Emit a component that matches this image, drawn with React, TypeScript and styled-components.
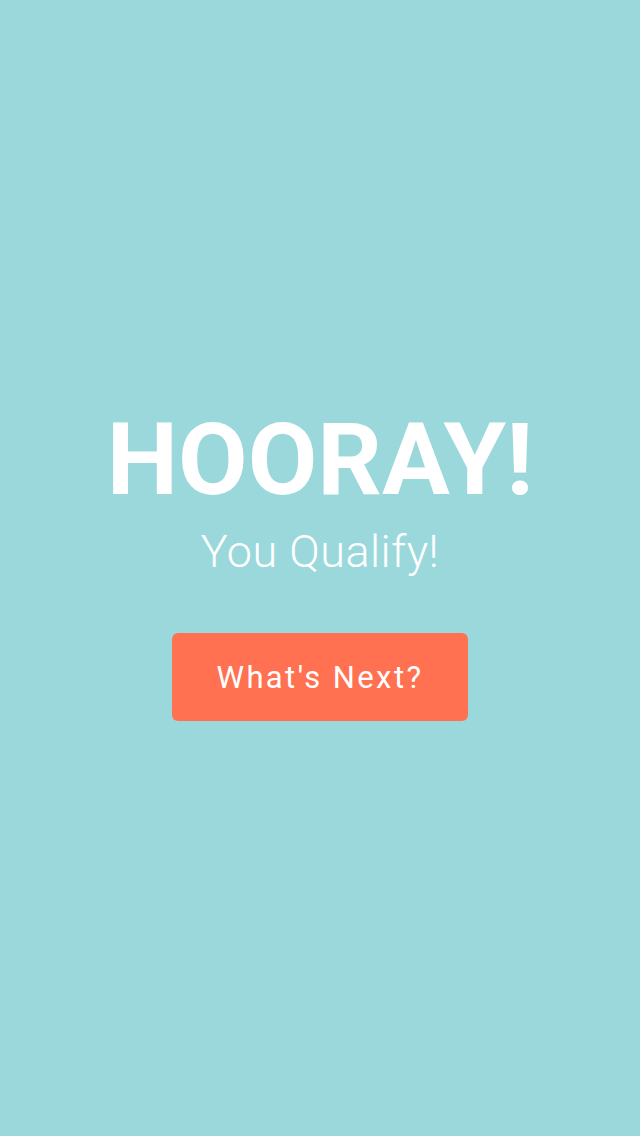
import styled, { createGlobalStyle } from 'styled-components';

const GlobalStyle = createGlobalStyle`
  html, body {
    margin: 0;
    padding: 0;
    background: #9bd8db;
  }
  body {
    font-family: Roboto, "Liberation Sans", sans-serif;
  }
`;

const Screen = styled.div`
  width: 640px;
  height: 1136px;
  background: #9bd8db;
  display: flex;
  flex-direction: column;
  align-items: center;
  padding-top: 401px;
  box-sizing: border-box;
  color: #ffffff;
`;

const Title = styled.h1`
  margin: 0;
  font-size: 101px;
  font-weight: 700;
  line-height: 118px;
  letter-spacing: 0;
`;

const Subtitle = styled.p`
  margin: 7px 0 0;
  font-size: 45px;
  font-weight: 300;
  line-height: 52px;
  letter-spacing: 0.5px;
`;

const NextButton = styled.button`
  margin-top: 55px;
  width: 296px;
  height: 88px;
  border: none;
  border-radius: 6px;
  background: #ff7150;
  color: #ffffff;
  font-family: Roboto, "Liberation Sans", sans-serif;
  font-size: 31px;
  font-weight: 400;
  letter-spacing: 2.4px;
  cursor: pointer;
`;

export default function App() {
  return (
    <>
      <GlobalStyle />
      <Screen>
        <Title>HOORAY!</Title>
        <Subtitle>You Qualify!</Subtitle>
        <NextButton>What's Next?</NextButton>
      </Screen>
    </>
  );
}
